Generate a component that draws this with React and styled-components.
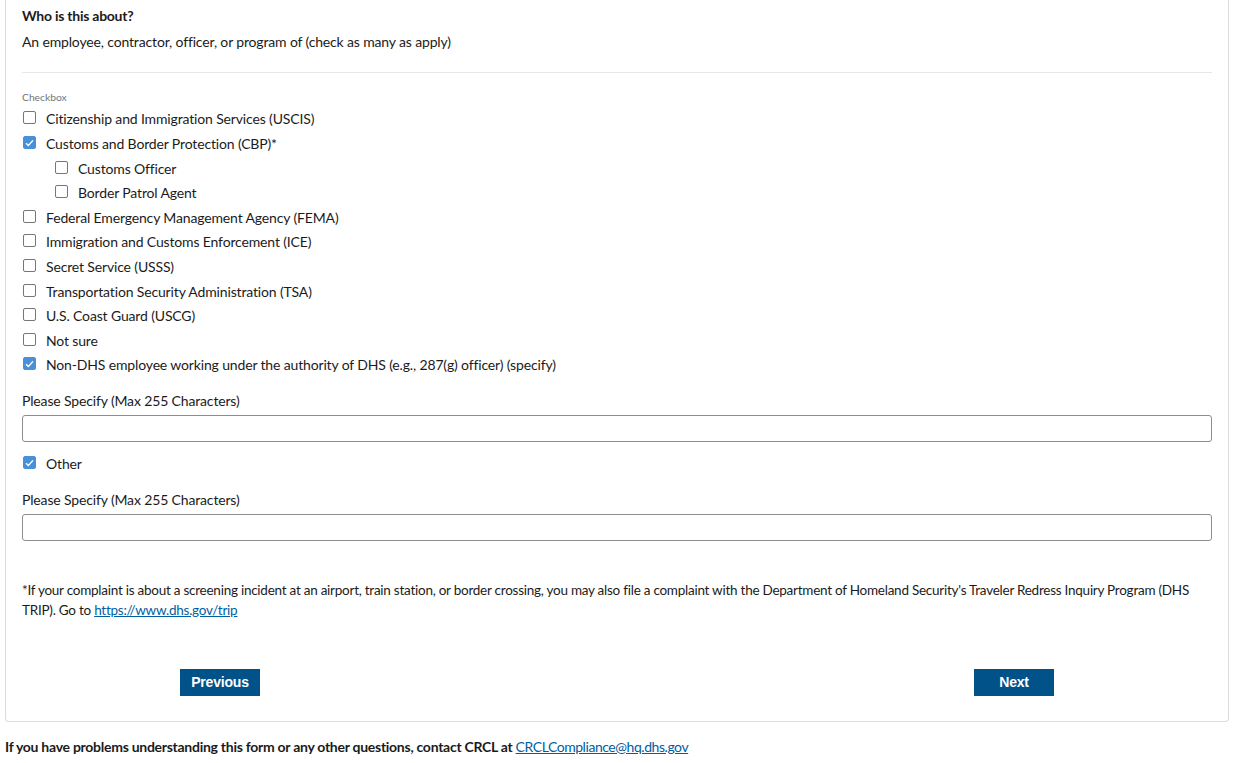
import React from "react";
import styled, { createGlobalStyle } from "styled-components";

const Global = createGlobalStyle`
  html, body { margin: 0; padding: 0; background: #fff; }
  body { font-family: "Lato", "Liberation Sans", sans-serif; color: #1b1b1b; letter-spacing: -0.15px; }
  * { box-sizing: border-box; }
`;

const Page = styled.div`
  padding: 0 8px 0 5px;
`;

const Card = styled.section`
  border: 1px solid #dcdcdc;
  border-top: none;
  border-radius: 0 0 4px 4px;
  padding: 6px 16px 25px 16px;
`;

const Title = styled.h2`
  margin: 0;
  font-size: 14px;
  line-height: 20px;
  font-weight: 700;
  letter-spacing: -0.25px;
`;

const Desc = styled.p`
  margin: 6px 0 0;
  font-size: 14px;
  line-height: 20px;
`;

const Rule = styled.hr`
  margin: 20px 0 0;
  border: none;
  border-top: 1px solid #e6e6e6;
`;

const SmallLabel = styled.div`
  margin-top: 17px;
  font-size: 10.3px;
  line-height: 14px;
  letter-spacing: 0;
  color: #71767a;
`;

const List = styled.div`
  margin-top: ${(p) => p.$mt || 0}px;
  display: flex;
  flex-direction: column;
`;

const Row = styled.label`
  display: flex;
  align-items: center;
  height: 24.6px;
  padding-left: ${(p) => (p.$sub ? 33 : 1)}px;
  font-size: 14px;
`;

const Box = styled.span`
  width: 13px;
  height: 13px;
  flex: none;
  border-radius: 2px;
  border: 1px solid ${(p) => (p.$on ? "#4a90d9" : "#767676")};
  background: ${(p) => (p.$on ? "#4a90d9" : "#fff")};
  display: flex;
  align-items: center;
  justify-content: center;
  margin-right: 10px;
  margin-top: -2px;
`;

const FieldLabel = styled.div`
  margin-top: ${(p) => p.$mt}px;
  font-size: 14px;
  line-height: 20px;
`;

const TextInput = styled.input`
  display: block;
  width: 100%;
  height: 27px;
  margin-top: 4px;
  border: 1px solid #8d8d8d;
  border-radius: 3px;
  background: #fff;
  padding: 0 6px;
  font: inherit;
`;

const Note = styled.p`
  margin: 39px 0 0;
  font-size: 13.5px;
  line-height: 20px;
  letter-spacing: -0.25px;
`;

const Link = styled.a`
  color: #005ea2;
  text-decoration: underline;
`;

const Buttons = styled.div`
  margin-top: 49px;
  display: flex;
  justify-content: space-between;
  padding: 0 158px;
`;

const Button = styled.button`
  width: 80px;
  height: 27px;
  border: none;
  border-radius: 0;
  background: #005288;
  color: #fff;
  font-family: "Liberation Sans", Arial, sans-serif;
  font-weight: 700;
  font-size: 14px;
  letter-spacing: -0.2px;
  cursor: pointer;
`;

const Footer = styled.p`
  margin: 15px 0 0;
  font-size: 14px;
  line-height: 20px;
  font-weight: 700;
  letter-spacing: -0.27px;
`;

const FooterLink = styled.a`
  font-weight: 400;
  color: #005ea2;
  text-decoration: underline;
  letter-spacing: -0.45px;
`;

function Check({ on, sub, children }) {
  return (
    <Row $sub={sub}>
      <Box $on={on}>
        {on && (
          <svg width="9" height="8" viewBox="0 0 9 8">
            <path d="M1 4.2 L3.4 6.4 L8 1.4" fill="none" stroke="#fff" strokeWidth="1.4" />
          </svg>
        )}
      </Box>
      {children}
    </Row>
  );
}

export default function App() {
  return (
    <Page>
      <Global />
      <Card>
        <Title>Who is this about?</Title>
        <Desc>An employee, contractor, officer, or program of (check as many as apply)</Desc>
        <Rule />
        <SmallLabel>Checkbox</SmallLabel>
        <List $mt={2.7}>
          <Check>Citizenship and Immigration Services (USCIS)</Check>
          <Check on>Customs and Border Protection (CBP)*</Check>
          <Check sub>Customs Officer</Check>
          <Check sub>Border Patrol Agent</Check>
          <Check>Federal Emergency Management Agency (FEMA)</Check>
          <Check>Immigration and Customs Enforcement (ICE)</Check>
          <Check>Secret Service (USSS)</Check>
          <Check>Transportation Security Administration (TSA)</Check>
          <Check>U.S. Coast Guard (USCG)</Check>
          <Check>Not sure</Check>
          <Check on>Non-DHS employee working under the authority of DHS (e.g., 287(g) officer) (specify)</Check>
        </List>
        <FieldLabel $mt={14}>Please Specify (Max 255 Characters)</FieldLabel>
        <TextInput type="text" />
        <List $mt={9}>
          <Check on>Other</Check>
        </List>
        <FieldLabel $mt={13.7}>Please Specify (Max 255 Characters)</FieldLabel>
        <TextInput type="text" />
        <Note>
          *If your complaint is about a screening incident at an airport, train station, or border crossing, you may also file a complaint with the Department of Homeland Security's Traveler Redress Inquiry Program (DHS TRIP). Go to{" "}
          <Link href="#">https://www.dhs.gov/trip</Link>
        </Note>
        <Buttons>
          <Button>Previous</Button>
          <Button>Next</Button>
        </Buttons>
      </Card>
      <Footer>
        If you have problems understanding this form or any other questions, contact CRCL at{" "}
        <FooterLink href="#">CRCLCompliance@hq.dhs.gov</FooterLink>
      </Footer>
    </Page>
  );
}
